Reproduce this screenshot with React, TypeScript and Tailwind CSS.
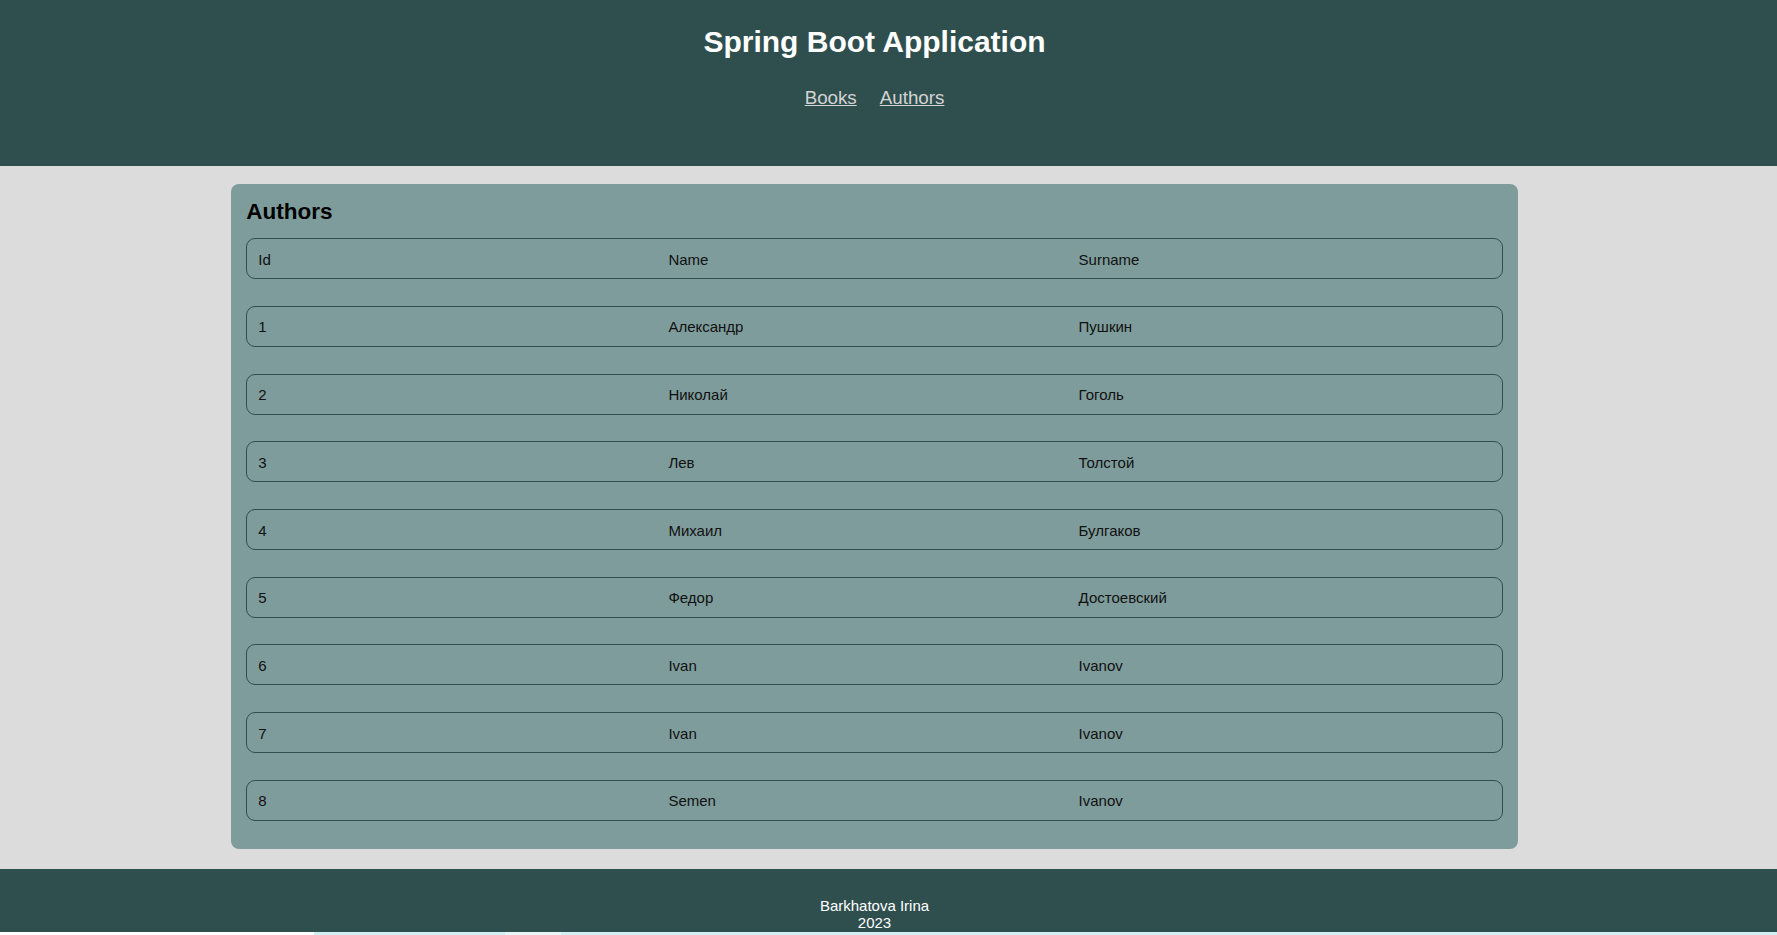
import React from "react";

const rows: [string, string, string][] = [
  ["1", "Александр", "Пушкин"],
  ["2", "Николай", "Гоголь"],
  ["3", "Лев", "Толстой"],
  ["4", "Михаил", "Булгаков"],
  ["5", "Федор", "Достоевский"],
  ["6", "Ivan", "Ivanov"],
  ["7", "Ivan", "Ivanov"],
  ["8", "Semen", "Ivanov"],
];

function Row({ cells }: { cells: [string, string, string] }) {
  return (
    <div className="grid grid-cols-3 h-[41px] items-center pl-[11px] pr-[13px] pt-[1px] border border-[#2f4f4f] rounded-[9px] text-[15px] leading-[17px] text-[#111]">
      {cells.map((c, i) => (
        <div key={i}>{c}</div>
      ))}
    </div>
  );
}

export default function App() {
  return (
    <div
      className="w-[1777px] h-[935px] overflow-hidden bg-[#dcdcdc]"
      style={{ fontFamily: '"Liberation Sans", Arial, sans-serif' }}
    >
      <header className="h-[166px] bg-[#2f4f4f] w-full">
        <div className="w-[1749px] flex flex-col items-center pt-[24.5px]">
          <h1 className="text-[30px] leading-[34.5px] font-bold text-white">Spring Boot Application</h1>
          <nav className="mt-[27.5px] flex gap-[23px] text-[18.75px] leading-[21.5px]">
            <a href="#" className="text-[#d3d3d3] underline">Books</a>
            <a href="#" className="text-[#d3d3d3] underline">Authors</a>
          </nav>
        </div>
      </header>
      <main className="w-[1749px] pt-[18px] pb-[20px]">
        <section className="w-[1286.5px] mx-auto bg-[#7e9c9b] rounded-[8px] px-[15px] pt-[14.5px] pb-[28px]">
          <h2 className="text-[22.5px] leading-[26px] font-bold text-black">Authors</h2>
          <div className="mt-[13.8px] flex flex-col gap-[26.7px]">
            <Row cells={["Id", "Name", "Surname"]} />
            {rows.map((r, i) => (
              <Row key={i} cells={r} />
            ))}
          </div>
        </section>
      </main>
      <footer className="h-[63px] bg-[#2f4f4f] w-full">
        <div className="w-[1749px] pt-[28px] flex flex-col items-center text-white text-[15px] leading-[17px]">
          <div>Barkhatova Irina</div>
          <div>2023</div>
        </div>
      </footer>
      <div className="flex h-[3px]">
        <div className="w-[314px] bg-white" />
        <div className="w-[191px] bg-[#d2eff1]" />
        <div className="w-[56px] bg-[#e6f6f7]" />
        <div className="flex-1 bg-[#d2eff1]" />
      </div>
    </div>
  );
}
